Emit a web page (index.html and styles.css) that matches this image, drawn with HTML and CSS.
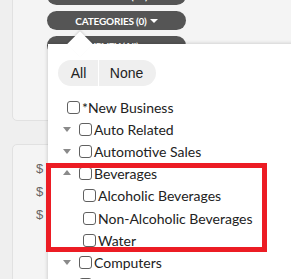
FILE: index.html
```html
<!DOCTYPE html>
<html>
<head>
<meta charset="utf-8">
<link rel="stylesheet" href="styles.css">
</head>
<body>
<div class="page">
  <div class="card card-top">
    <div class="pills">
      <div class="pill">LOCATIONS (All) <span class="caret"></span></div>
      <div class="pill">CATEGORIES (0) <span class="caret"></span></div>
      <div class="pill">SURVEY (All) <span class="caret"></span></div>
    </div>
  </div>
  <div class="card card-bottom">
    <div class="dollar">$</div>
    <div class="dollar">$</div>
    <div class="dollar">$</div>
  </div>

  <div class="popup">
    <div class="arrow"></div>
    <div class="seg">
      <span class="seg-btn seg-all">All</span>
      <span class="seg-btn seg-none">None</span>
    </div>
    <ul class="list">
      <li class="row leaf-top"><span class="cb"></span><span class="lbl">*New Business</span></li>
      <li class="row"><span class="tri down"></span><span class="cb"></span><span class="lbl">Auto Related</span></li>
      <li class="row"><span class="tri down"></span><span class="cb"></span><span class="lbl">Automotive Sales</span></li>
      <li class="row"><span class="tri up"></span><span class="cb"></span><span class="lbl">Beverages</span></li>
      <li class="row child"><span class="cb"></span><span class="lbl">Alcoholic Beverages</span></li>
      <li class="row child"><span class="cb"></span><span class="lbl">Non-Alcoholic Beverages</span></li>
      <li class="row child"><span class="cb"></span><span class="lbl">Water</span></li>
      <li class="row"><span class="tri down"></span><span class="cb"></span><span class="lbl">Computers</span></li>
      <li class="row"><span class="tri down"></span><span class="cb"></span><span class="lbl">Electronics</span></li>
    </ul>
  </div>

  <div class="highlight"></div>
</div>
</body>
</html>
```

FILE: styles.css
```css
html, body {
  margin: 0;
  padding: 0;
}
body {
  background: #efefef;
  font-family: Lato, "Liberation Sans", sans-serif;
}
.page {
  position: relative;
  width: 291px;
  height: 279px;
  overflow: hidden;
  padding-top: 1px;
  box-sizing: border-box;
}
.card {
  margin-left: 12px;
  width: 320px;
  background: #f4f4f4;
  border: 1px solid #e1e1e1;
  border-radius: 5px;
  box-sizing: border-box;
}
.card-top {
  margin-top: -12px;
  height: 132px;
  padding-left: 34px;
  padding-top: 0;
}
.pills {
  display: flex;
  flex-direction: column;
  gap: 6px;
  margin-top: -4px;
}
.pill {
  width: 139px;
  height: 19px;
  border-radius: 10px;
  background: #555555;
  color: #ffffff;
  font-family: Lato, "Liberation Sans", sans-serif;
  font-weight: 700;
  font-size: 10px;
  letter-spacing: -0.2px;
  display: flex;
  align-items: center;
  justify-content: center;
  gap: 3px;
}
.caret {
  display: inline-block;
  width: 0;
  height: 0;
  border-left: 4px solid transparent;
  border-right: 4px solid transparent;
  border-top: 4px solid #ffffff;
  margin-top: 1px;
}
.card-bottom {
  margin-top: 23px;
  height: 200px;
  padding-top: 16px;
  padding-left: 23px;
}
.dollar {
  height: 23px;
  line-height: 16px;
  font-family: "Liberation Sans", sans-serif;
  font-size: 13px;
  color: #666666;
}

.popup {
  position: absolute;
  left: 48px;
  top: 44px;
  width: 270px;
  height: 260px;
  background: #ffffff;
  box-shadow: 0 0 4px rgba(0,0,0,0.22);
  padding: 16px 10px 0 10px;
  box-sizing: border-box;
}
.arrow {
  position: absolute;
  left: 23px;
  top: -9px;
  width: 18px;
  height: 18px;
  background: #ffffff;
  transform: rotate(45deg);
  box-shadow: -1px -1px 2px rgba(0,0,0,0.12);
}
.seg {
  position: relative;
  display: inline-flex;
  height: 26px;
  border-radius: 13px;
  overflow: hidden;
  font-family: "Liberation Sans", Arial, sans-serif;
  font-size: 14px;
  color: #222222;
}
.seg-btn {
  display: flex;
  align-items: center;
  justify-content: center;
  background: #efefef;
}
.seg-all {
  width: 41px;
  padding-left: 1px;
  box-sizing: border-box;
  border-right: 1px solid #ffffff;
}
.seg-none {
  width: 57px;
  padding-right: 2px;
  box-sizing: border-box;
}
.list {
  list-style: none;
  margin: 10px 0 0 0;
  padding: 0;
}
.row {
  display: flex;
  align-items: center;
  height: 22.2px;
  font-size: 14px;
  color: #222222;
  padding-left: 5px;
}
.leaf-top {
  padding-left: 9px;
}
.child {
  padding-left: 25px;
}
.tri {
  width: 0;
  height: 0;
  border-left: 4px solid transparent;
  border-right: 4px solid transparent;
  margin-right: 8px;
}
.tri.down {
  border-top: 5px solid #8a8a8a;
  margin-top: 1px;
}
.tri.up {
  border-bottom: 5px solid #8a8a8a;
  margin-top: -2px;
}
.cb {
  width: 13px;
  height: 13px;
  border: 1px solid #606060;
  border-radius: 3px;
  box-sizing: border-box;
  margin-right: 2px;
  flex: none;
  background: #ffffff;
}
.lbl {
  white-space: nowrap;
}

.highlight {
  position: absolute;
  left: 46px;
  top: 163px;
  width: 221px;
  height: 89px;
  border: 5px solid #ec1c24;
  box-sizing: border-box;
}
```
